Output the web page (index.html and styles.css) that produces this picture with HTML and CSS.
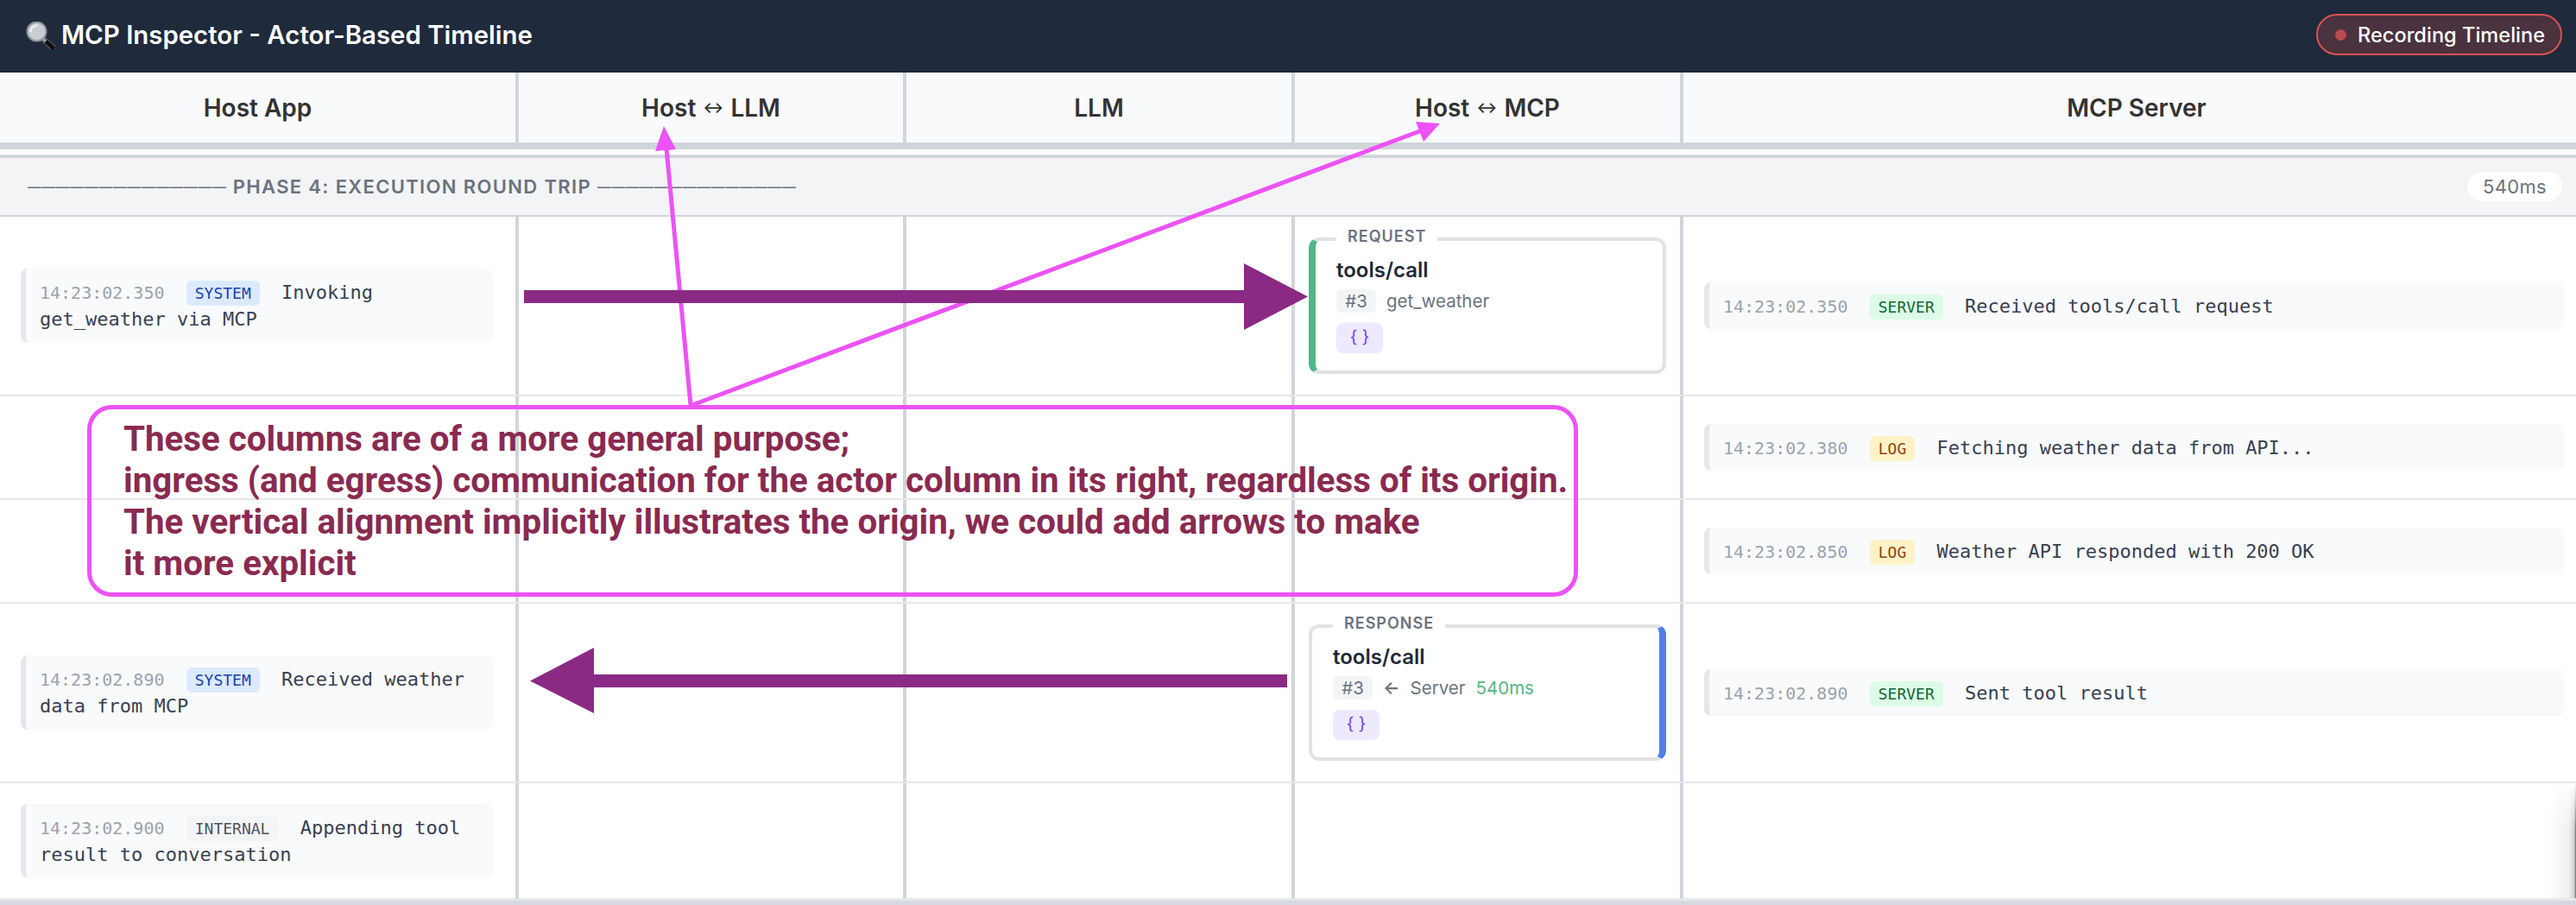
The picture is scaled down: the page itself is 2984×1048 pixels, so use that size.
FILE: index.html
```html
<!DOCTYPE html>
<html lang="en">
<head>
<meta charset="utf-8">
<title>MCP Inspector - Actor-Based Timeline</title>
<link rel="stylesheet" href="styles.css">
</head>
<body>
<div class="page">
  <header class="topbar">
    <h1 class="title">
      <svg class="glass" width="34" height="32" viewBox="0 0 34 32" aria-hidden="true">
        <path d="M21 21 L31 30" stroke="#5b5f64" stroke-width="7" stroke-linecap="round"/>
        <path d="M21 21 L31 30" stroke="#0e0e0e" stroke-width="5" stroke-linecap="round"/>
        <path d="M19 19 L23 23" stroke="#9a9ea3" stroke-width="4"/>
        <circle cx="12.5" cy="11.5" r="11" fill="#c9ccd0" stroke="#8f9398" stroke-width="2"/>
        <path d="M5.5 11 A7.5 7.5 0 0 1 12.5 4.5" fill="none" stroke="#eef0f2" stroke-width="2.5" stroke-linecap="round"/>
      </svg>
      <span>MCP Inspector - Actor-Based Timeline</span>
    </h1>
    <div class="recording"><span class="rec-dot"></span>Recording Timeline</div>
  </header>

  <div class="grid columns">
    <div class="col-title">Host App</div>
    <div class="col-title">Host <span class="col-arrow">↔</span> LLM</div>
    <div class="col-title">LLM</div>
    <div class="col-title">Host <span class="col-arrow">↔</span> MCP</div>
    <div class="col-title col-title-last">MCP Server</div>
  </div>

  <div class="phase">
    <div class="phase-name"><span class="rule">──────────────</span> Phase 4: Execution Round Trip <span class="rule">──────────────</span></div>
    <div class="phase-time">540ms</div>
  </div>

  <div class="grid row row-tall">
    <div class="cell cell-host">
      <div class="entry"><span class="ts">14:23:02.350</span> <span class="tag tag-system">SYSTEM</span> Invoking get_weather via MCP</div>
    </div>
    <div class="cell"></div>
    <div class="cell"></div>
    <div class="cell cell-card">
      <div class="card card-request">
        <span class="card-label">REQUEST</span>
        <div class="card-method">tools/call</div>
        <div class="card-meta"><span class="card-id">#3</span><span>get_weather</span></div>
        <span class="card-json">{ }</span>
      </div>
    </div>
    <div class="cell cell-server">
      <div class="entry"><span class="ts">14:23:02.350</span> <span class="tag tag-server">SERVER</span> Received tools/call request</div>
    </div>
  </div>

  <div class="grid row row-short">
    <div class="cell cell-host"></div>
    <div class="cell"></div>
    <div class="cell"></div>
    <div class="cell"></div>
    <div class="cell cell-server">
      <div class="entry"><span class="ts">14:23:02.380</span> <span class="tag tag-log">LOG</span> Fetching weather data from API...</div>
    </div>
  </div>

  <div class="grid row row-short">
    <div class="cell cell-host"></div>
    <div class="cell"></div>
    <div class="cell"></div>
    <div class="cell"></div>
    <div class="cell cell-server">
      <div class="entry"><span class="ts">14:23:02.850</span> <span class="tag tag-log">LOG</span> Weather API responded with 200 OK</div>
    </div>
  </div>

  <div class="grid row row-tall">
    <div class="cell cell-host">
      <div class="entry"><span class="ts">14:23:02.890</span> <span class="tag tag-system">SYSTEM</span> Received weather data from MCP</div>
    </div>
    <div class="cell"></div>
    <div class="cell"></div>
    <div class="cell cell-card">
      <div class="card card-response">
        <span class="card-label">RESPONSE</span>
        <div class="card-method">tools/call</div>
        <div class="card-meta"><span class="card-id">#3</span><span class="card-arrow">←</span><span>Server</span><span class="card-latency">540ms</span></div>
        <span class="card-json">{ }</span>
      </div>
    </div>
    <div class="cell cell-server">
      <div class="entry"><span class="ts">14:23:02.890</span> <span class="tag tag-server">SERVER</span> Sent tool result</div>
    </div>
  </div>

  <div class="grid row row-last">
    <div class="cell cell-host">
      <div class="entry"><span class="ts">14:23:02.900</span> <span class="tag tag-internal">INTERNAL</span> Appending tool result to conversation</div>
    </div>
    <div class="cell"></div>
    <div class="cell"></div>
    <div class="cell"></div>
    <div class="cell cell-server"></div>
  </div>
  <div class="end-rule"></div>

  <svg class="annotations" width="2984" height="1048" viewBox="0 0 2984 1048" aria-hidden="true">
    <rect class="note-box" x="103.5" y="471.5" width="1722" height="217" rx="26"/>
    <path class="note-line" d="M800 469 L772 172"/>
    <path class="note-head" d="M769 146 L783 173 L759 175 Z"/>
    <path class="note-line" d="M802 469 L1647 151"/>
    <path class="note-head" d="M1668 143 L1649 164 L1640 141 Z"/>
    <path class="big-arrow" d="M607 336 H1441 V305 L1515 343.5 L1441 382 V351 H607 Z"/>
    <path class="big-arrow" d="M1491 781 H688 V750 L614 788.5 L688 826 V796 H1491 Z"/>
  </svg>
  <div class="note">These columns are of a more general purpose;<br>ingress (and egress) communication for the actor column in its right, regardless of its origin.<br>The vertical alignment implicitly illustrates the origin, we could add arrows to make<br>it more explicit</div>
  <div class="edge-shadow"></div>
</div>
</body>
</html>
```

FILE: styles.css
```css
* { box-sizing: border-box; }
html, body { margin: 0; padding: 0; background: #fff; }
body { font-family: Inter, "Liberation Sans", sans-serif; color: #374151; }

.page { position: relative; width: 2984px; height: 1048px; overflow: hidden; }

.topbar {
  height: 84px;
  background: #1f2a3c;
  display: flex;
  align-items: center;
  justify-content: space-between;
  padding: 0 16px 4px 30px;
}
.title {
  margin: 0;
  display: flex;
  align-items: center;
  gap: 7px;
  font-size: 29.4px;
  font-weight: 600;
  color: #fff;
}
.glass { display: block; margin-top: 2px; }
.recording {
  height: 48px;
  width: 285px;
  display: flex;
  align-items: center;
  gap: 13px;
  padding-left: 20px;
  border: 2px solid #dc5250;
  border-radius: 24px;
  background: #4a323e;
  color: #fff;
  font-size: 23.6px;
  font-weight: 500;
}
.rec-dot { width: 13px; height: 13px; border-radius: 50%; background: #b94b4e; }

.grid { display: grid; grid-template-columns: 601px 449px 450px 450px 1034px; }

.columns { height: 89px; background: #f9fafb; border-bottom: 8px solid #d1d5db; }
.col-title {
  display: flex;
  align-items: center;
  justify-content: center;
  gap: 8px;
  font-size: 28px;
  font-weight: 600;
  color: #333;
  border-right: 4px solid #d1d5db;
}
.col-title-last { border-right: 0; padding-left: 16px; }
.col-arrow { font-size: 18px; }

.phase {
  margin-top: 6px;
  height: 72px;
  display: flex;
  align-items: center;
  justify-content: space-between;
  padding: 0 16px 0 32px;
  background: #f3f4f6;
  border-top: 4px solid #d1d5db;
  border-bottom: 2px solid #d1d5db;
}
.phase-name {
  font-size: 22px;
  font-weight: 600;
  letter-spacing: 1.35px;
  text-transform: uppercase;
  color: #6b7280;
}
.rule { letter-spacing: .9px; }
.phase-time {
  width: 110px;
  height: 34px;
  display: flex;
  align-items: center;
  justify-content: center;
  border-radius: 17px;
  background: #fff;
  color: #6b7280;
  font-size: 22px;
  letter-spacing: .3px;
}

.row { border-bottom: 2px solid #e5e7eb; }
.row-tall { height: 208px; }
.row-short { height: 120px; }
.row-last { height: 133px; border-bottom: 0; }
.end-rule { height: 8px; background: #d6d9e0; border-top: 3px solid #e5e7eb; }

.cell {
  display: flex;
  align-items: center;
  border-right: 4px solid #d1d5db;
}
.cell-host { padding: 0 26px 0 24px; }
.cell-server { padding: 0 14px 0 24px; border-right: 0; }
.cell-card { padding: 0 16px; }

.entry {
  width: 100%;
  padding: 13px 16px 11px;
  background: #f9fafb;
  border-left: 6px solid #e5e7eb;
  border-radius: 8px;
  font-family: "DejaVu Sans Mono", monospace;
  font-size: 22px;
  line-height: 1.4;
  color: #374151;
}
.ts { font-size: 20px; color: #9ca3af; margin-right: 12px; }
.tag {
  font-size: 18px;
  padding: 4px 10px;
  margin-right: 12px;
  border-radius: 6px;
}
.tag-system { background: #dbeafe; color: #1e40af; }
.tag-server { background: #dcfce7; color: #166534; }
.tag-log { background: #fef3c7; color: #92400e; }
.tag-internal { background: #f3f4f6; color: #4b5563; }

.card {
  position: relative;
  width: 100%;
  height: 158px;
  padding: 20px 24px;
  background: #fff;
  border: 4px solid #e2e2e2;
  border-radius: 12px;
}
.card-request { border-left: 8px solid #52b788; }
.card-response { border-right: 8px solid #4f7fe8; }
.card-label {
  position: absolute;
  top: -18px;
  left: 24px;
  padding: 0 13px;
  background: #fff;
  font-size: 18px;
  line-height: 26px;
  font-weight: 600;
  letter-spacing: 1px;
  color: #6b7280;
}
.card-method { font-size: 24px; line-height: 28px; font-weight: 600; color: #1f2937; }
.card-meta {
  display: flex;
  align-items: center;
  gap: 12px;
  height: 27px;
  margin-top: 8px;
  font-size: 20.5px;
  color: #6b7280;
}
.card-id {
  height: 27px;
  width: 46px;
  display: flex;
  align-items: center;
  justify-content: center;
  border-radius: 6px;
  background: #f3f4f6;
}
.card-arrow { font-weight: 600; }
.card-latency { color: #52b788; }
.card-json {
  display: block;
  width: 54px;
  height: 35px;
  margin-top: 12px;
  border-radius: 8px;
  background: #ede9fe;
  color: #6d3fe8;
  font-size: 20px;
  line-height: 33px;
  text-align: center;
}

.annotations { position: absolute; top: 0; left: 0; pointer-events: none; }
.note-box { fill: none; stroke: #ec52f6; stroke-width: 5; }
.note-line { fill: none; stroke: #ec52f6; stroke-width: 5; }
.note-head { fill: #ec52f6; }
.big-arrow { fill: #8a2a85; }

.note {
  position: absolute;
  left: 143px;
  top: 485px;
  font-family: Roboto, sans-serif;
  font-size: 40.3px;
  line-height: 48px;
  font-weight: 700;
  white-space: nowrap;
  color: #8a2a50;
}

.edge-shadow {
  position: absolute;
  right: 0;
  top: 905px;
  width: 34px;
  height: 135px;
  background: linear-gradient(to right, rgba(0,0,0,0), rgba(0,0,0,.06) 75%, rgba(0,0,0,.18) 94%, rgba(0,0,0,.6));
  -webkit-mask-image: linear-gradient(to bottom, transparent, #000 40%);
  mask-image: linear-gradient(to bottom, transparent, #000 40%);
}
```
